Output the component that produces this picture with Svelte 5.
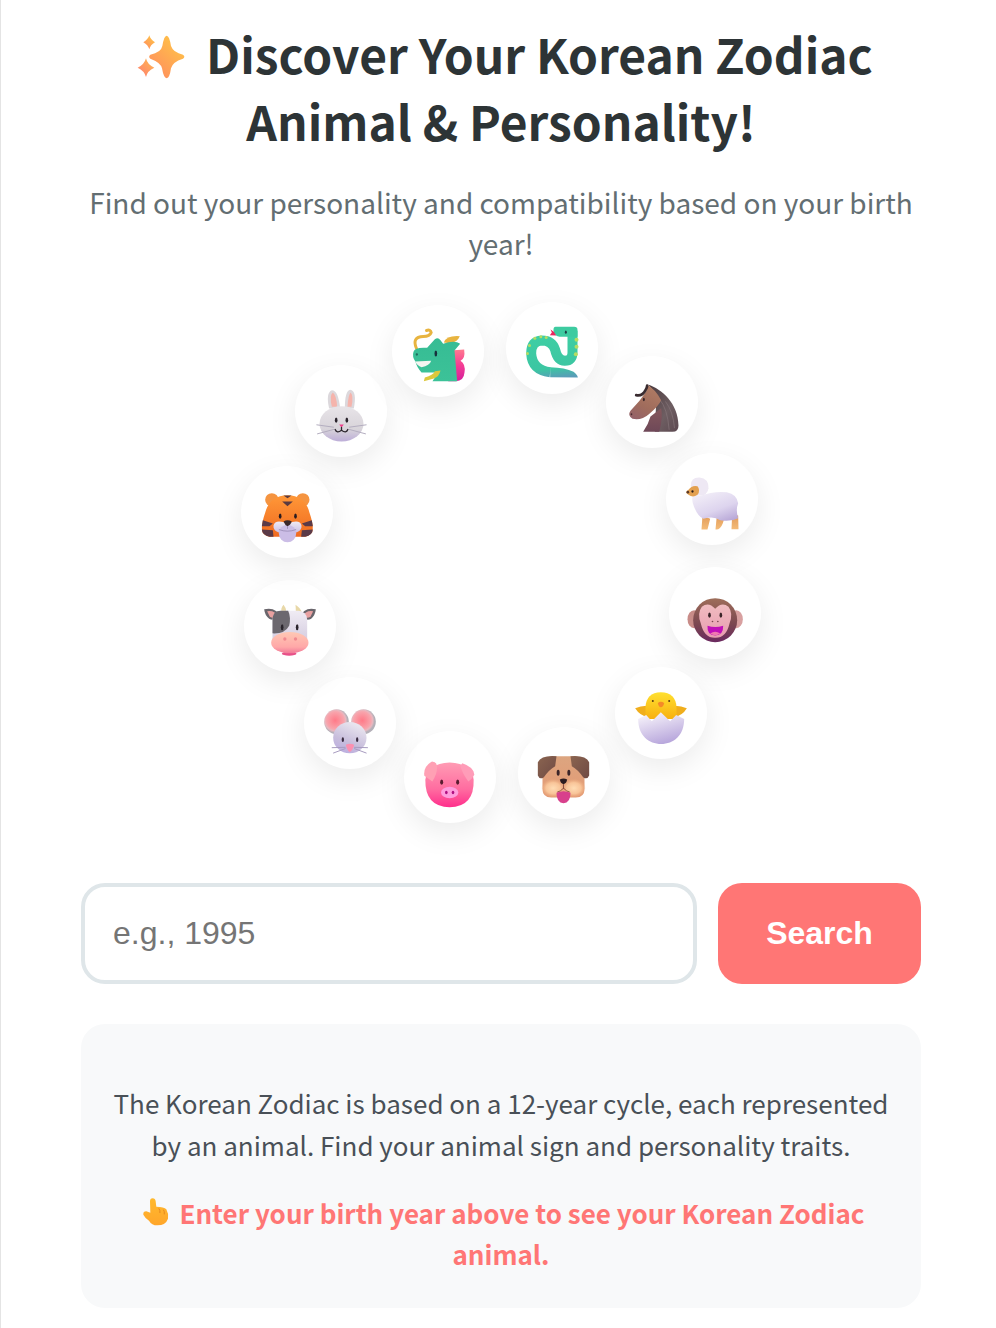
<script>
  const R = 220.2;
  const animals = [
    { name: 'snake', icon: snake },
    { name: 'horse', icon: horse },
    { name: 'sheep', icon: sheep },
    { name: 'monkey', icon: monkey },
    { name: 'rooster', icon: chick },
    { name: 'dog', icon: dog },
    { name: 'pig', icon: pig },
    { name: 'rat', icon: rat },
    { name: 'ox', icon: cow },
    { name: 'tiger', icon: tiger },
    { name: 'rabbit', icon: rabbit },
    { name: 'dragon', icon: dragon }
  ].map((a, i) => {
    const t = ((13.3 + i * 30) * Math.PI) / 180;
    return { ...a, x: 420 + R * Math.sin(t) - 46, y: 260.5 - R * Math.cos(t) - 46 };
  });
</script>

{#snippet snake()}
  <svg class="art" viewBox="17.5 21.5 276 276">
    <defs><linearGradient id="sn" gradientUnits="userSpaceOnUse" x1="150" y1="100" x2="165" y2="250"><stop offset="0" stop-color="#3fd0a4"/><stop offset="0.8" stop-color="#3cc6a2"/><stop offset="1" stop-color="#5a9cb8"/></linearGradient></defs>
    <path d="M217 108V172Q217 198 194 198Q172 197 165 165Q156 137 125 137Q93 139 93 176Q96 226 150 232" fill="none" stroke="url(#sn)" stroke-width="30"/>
    <path d="M150 217Q195 218 220 231Q232 240 233 248Q195 247 150 247Z" fill="url(#sn)"/>
    <path d="M166 96H222Q232 96 232 106V126H178Q160 122 160 106Q160 96 166 96Z" fill="#3dcba0"/>
    <ellipse cx="197" cy="112" rx="3" ry="5" fill="#1d3c44"/>
    <path d="M161 111L151 104L155 113L149 121L168 122Z" fill="#e8285e"/>
    <g fill="#b6dc62"><circle cx="229" cy="135" r="6"/><circle cx="229" cy="156" r="6"/><circle cx="227" cy="178" r="6"/><circle cx="104" cy="130" r="4.5"/><circle cx="122" cy="126" r="4.5"/><circle cx="138" cy="128" r="4.5"/><circle cx="82" cy="176" r="4.5"/><circle cx="88" cy="152" r="4.5"/></g>
  </svg>
{/snippet}

{#snippet horse()}
  <svg class="art" viewBox="318.5 183.5 276 276">
    <defs>
      <linearGradient id="hm" x1="0" y1="0" x2="1" y2="1"><stop offset="0" stop-color="#4a3a3e"/><stop offset="0.6" stop-color="#6e5e62"/><stop offset="1" stop-color="#5c4850"/></linearGradient>
      <linearGradient id="hf" x1="0.7" y1="0" x2="0.2" y2="1"><stop offset="0" stop-color="#b07c64"/><stop offset="0.6" stop-color="#a06c5c"/><stop offset="1" stop-color="#946268"/></linearGradient>
      <linearGradient id="hn" x1="0.5" y1="0" x2="0.5" y2="1"><stop offset="0" stop-color="#85585c"/><stop offset="1" stop-color="#6e4858"/></linearGradient>
    </defs>
    <path d="M445 270C485 282 535 325 536 392Q536 411 518 411H465L470 300Z" fill="url(#hm)"/>
    <path d="M478 312Q503 340 508 405M497 320Q520 350 524 400" fill="none" stroke="#847478" stroke-width="3" opacity="0.7"/>
    <path d="M452 365Q445 390 430 411H478Q490 370 484 340Z" fill="url(#hn)"/>
    <path d="M442 270L439 290Q420 320 392 348Q382 362 398 372Q425 378 447 358Q476 334 484 316Q465 282 442 270Z" fill="url(#hf)"/>
    <path d="M409 301Q428 305 437 286Q442 278 442 272" fill="none" stroke="#3a2c30" stroke-width="8" stroke-linecap="round"/>
    <ellipse cx="395" cy="358" rx="2.5" ry="3" fill="#4a2c30"/>
    <ellipse cx="432" cy="314" rx="3" ry="5" fill="#3a2428"/>
  </svg>
{/snippet}

{#snippet sheep()}
  <svg class="art" viewBox="497.5 474.5 276 276">
    <defs>
      <linearGradient id="sb" x1="0.2" y1="0" x2="0.8" y2="1"><stop offset="0" stop-color="#f3eff8"/><stop offset="0.6" stop-color="#ddd4ee"/><stop offset="1" stop-color="#b9a9d8"/></linearGradient>
      <linearGradient id="sl" x1="0.5" y1="0" x2="0.5" y2="1"><stop offset="0" stop-color="#e09a58"/><stop offset="1" stop-color="#f5bc78"/></linearGradient>
    </defs>
    <path d="M607 662L604 704H622L630 672ZM650 662L646 704Q660 706 668 685L674 666ZM696 660L694 703H715L714 662Z" fill="url(#sl)"/>
    <path d="M600 603Q570 590 578 625Q590 664 610 672Q640 662 660 676Q690 682 714 670Q706 645 714 625Q710 598 680 592Q640 588 600 603Z" fill="url(#sb)"/>
    <path d="M572 572Q572 547 598 548Q626 551 625 580Q622 602 600 602Q574 600 572 572Z" fill="#eee8f4"/>
    <path d="M565 585Q575 570 592 574Q602 586 592 600Q578 610 565 600Q552 592 565 585Z" fill="#e3a050"/>
    <circle cx="563" cy="592" r="4" fill="#5b3a28"/>
    <circle cx="577" cy="590" r="3.5" fill="#2b1c18"/>
  </svg>
{/snippet}

{#snippet monkey()}
  <svg class="art" viewBox="506.5 20.5 276 276">
    <defs>
      <linearGradient id="mh" x1="0.5" y1="0" x2="0.5" y2="1"><stop offset="0" stop-color="#9e6e5a"/><stop offset="0.6" stop-color="#7a4650"/><stop offset="1" stop-color="#6b2a60"/></linearGradient>
      <linearGradient id="mf" x1="0.5" y1="0" x2="0.5" y2="1"><stop offset="0" stop-color="#f0bcc0"/><stop offset="1" stop-color="#e89cb0"/></linearGradient>
    </defs>
    <ellipse cx="582" cy="177" rx="20" ry="27" fill="#c88c88"/>
    <ellipse cx="708" cy="177" rx="20" ry="27" fill="#d8a0a0"/>
    <circle cx="645" cy="180" r="66" fill="url(#mh)"/>
    <path d="M645 146Q625 124 605 140Q590 160 602 190Q612 234 645 233Q678 234 688 190Q700 160 685 140Q665 124 645 146Z" fill="url(#mf)"/>
    <ellipse cx="628" cy="165" rx="4" ry="8" fill="#3a2428"/>
    <ellipse cx="662" cy="165" rx="4" ry="8" fill="#3a2428"/>
    <circle cx="637" cy="184" r="2.5" fill="#7a4650"/><circle cx="653" cy="184" r="2.5" fill="#7a4650"/>
    <path d="M622 197Q645 204 669 197Q670 226 645 226Q620 226 622 197Z" fill="#c010b8"/>
    <path d="M630 220Q645 210 660 220Q645 230 630 220Z" fill="#f07ab0"/>
  </svg>
{/snippet}

{#snippet chick()}
  <svg class="art" viewBox="344.5 324 276 276">
    <defs>
      <linearGradient id="cy" x1="0.5" y1="0" x2="0.5" y2="1"><stop offset="0" stop-color="#ffe030"/><stop offset="1" stop-color="#f8b010"/></linearGradient>
      <linearGradient id="ce" x1="0.3" y1="0" x2="0.7" y2="1"><stop offset="0" stop-color="#f6f2fa"/><stop offset="1" stop-color="#b4a2da"/></linearGradient>
    </defs>
    <path d="M440 440Q420 440 405 448Q420 472 445 474ZM524 440Q544 440 560 448Q546 472 520 474Z" fill="#f0ae1c"/>
    <path d="M436 480V445Q438 401 482 400Q527 401 529 445V480Z" fill="url(#cy)"/>
    <path d="M414 480L438 468L455 487L482 460L510 487L528 468L552 480C552 530 520 555 483 555C446 555 414 530 414 480Z" fill="url(#ce)"/>
    <path d="M473 432Q482 425 492 432Q490 444 482 445Q475 444 473 432Z" fill="#f58a28"/>
    <circle cx="458" cy="426" r="3" fill="#5a3a10"/><circle cx="507" cy="426" r="3" fill="#5a3a10"/>
  </svg>
{/snippet}

{#snippet dog()}
  <svg class="art" viewBox="54.5 504.5 276 276">
    <defs>
      <linearGradient id="dh" x1="0.5" y1="0" x2="0.5" y2="1"><stop offset="0" stop-color="#dca580"/><stop offset="1" stop-color="#e49a74"/></linearGradient>
      <linearGradient id="de" x1="0" y1="0" x2="1" y2="1"><stop offset="0" stop-color="#8a6450"/><stop offset="1" stop-color="#6f4a44"/></linearGradient>
      <radialGradient id="dc"><stop offset="0" stop-color="#ffdcb4"/><stop offset="0.6" stop-color="#f8c498"/><stop offset="1" stop-color="#f0b080" stop-opacity="0"/></radialGradient>
    </defs>
    <path d="M128 625Q128 592 160 592H222Q254 592 254 625V690Q254 716 228 716H154Q128 716 128 690Z" fill="url(#dh)"/>
    <path d="M170 592Q125 588 114 610V650Q120 664 132 655Q148 632 166 622Z" fill="url(#de)"/>
    <path d="M212 592Q258 588 268 610V650Q262 664 250 655Q234 632 216 622Z" fill="url(#de)"/>
    <ellipse cx="160" cy="688" rx="36" ry="28" fill="url(#dc)"/>
    <ellipse cx="222" cy="688" rx="36" ry="28" fill="url(#dc)"/>
    <ellipse cx="175" cy="642" rx="4.5" ry="9" fill="#3a2428"/><ellipse cx="207" cy="642" rx="4.5" ry="9" fill="#3a2428"/>
    <path d="M180 662Q191 656 202 662Q200 674 191 676Q182 674 180 662Z" fill="#2b1c20"/>
    <path d="M191 676V690M172 700Q182 698 191 688Q200 698 210 700" fill="none" stroke="#7a4034" stroke-width="2.5"/>
    <path d="M170 702Q191 692 212 702Q212 733 191 733Q170 733 170 702Z" fill="#d8408c"/>
  </svg>
{/snippet}

{#snippet pig()}
  <svg class="art" viewBox="521 513.5 276 276">
    <defs>
      <linearGradient id="ph" x1="0.5" y1="0" x2="0.5" y2="1"><stop offset="0" stop-color="#ff9cb4"/><stop offset="0.6" stop-color="#ff6ca0"/><stop offset="1" stop-color="#ff2e8c"/></linearGradient>
    </defs>
    <path d="M585 660Q590 612 658 608Q726 612 730 660Q732 742 658 742Q584 742 585 660Z" fill="url(#ph)"/>
    <path d="M605 605Q578 620 582 648L606 665Q622 640 620 618Q618 605 605 605Z" fill="#ffa0b4"/>
    <path d="M696 610Q732 622 732 645Q724 660 714 665Q695 640 690 618Z" fill="#ff9cb8"/>
    <ellipse cx="634" cy="667" rx="4.5" ry="8" fill="#5a1c30"/><ellipse cx="682" cy="667" rx="4.5" ry="8" fill="#5a1c30"/>
    <ellipse cx="658" cy="698" rx="26" ry="17" fill="#ff9cdc"/>
    <ellipse cx="648" cy="698" rx="4" ry="5" fill="#b01080"/><ellipse cx="668" cy="698" rx="4" ry="5" fill="#b01080"/>
  </svg>
{/snippet}

{#snippet rat()}
  <svg class="art" viewBox="221.5 350 276 276">
    <defs>
      <linearGradient id="rh" x1="0.7" y1="0.1" x2="0.3" y2="1"><stop offset="0" stop-color="#e8e4ee"/><stop offset="0.6" stop-color="#c8bedc"/><stop offset="1" stop-color="#bcaee0"/></linearGradient>
      <radialGradient id="re" cx="0.45" cy="0.45"><stop offset="0" stop-color="#ff7a88"/><stop offset="0.7" stop-color="#f8a4ac"/><stop offset="0.85" stop-color="#e8b8c0"/><stop offset="1" stop-color="#b4b0b8"/></radialGradient>
    </defs>
    <circle cx="319" cy="484" r="37" fill="url(#re)"/>
    <circle cx="400" cy="484" r="37" fill="url(#re)"/>
    <ellipse cx="359" cy="532" rx="50" ry="47" fill="url(#rh)"/>
    <ellipse cx="338" cy="538" rx="3.5" ry="7" fill="#3a2c40"/><ellipse cx="381" cy="538" rx="3.5" ry="7" fill="#3a2c40"/>
    <path d="M347 553Q359 548 372 553Q368 570 359 575Q350 570 347 553Z" fill="#fb90b0"/>
    <path d="M345 561L306 562M345 565L310 578M373 561L412 562M373 565L408 578" stroke="#a89cc0" stroke-width="3" fill="none" stroke-linecap="round"/>
  </svg>
{/snippet}

{#snippet cow()}
  <svg class="art" viewBox="42.5 58 276 276">
    <defs>
      <linearGradient id="ow" x1="0.5" y1="0" x2="0.5" y2="1"><stop offset="0" stop-color="#f0ecf4"/><stop offset="1" stop-color="#cfc6dc"/></linearGradient>
      <linearGradient id="om" x1="0.5" y1="0" x2="0.5" y2="1"><stop offset="0" stop-color="#ffc8b4"/><stop offset="0.7" stop-color="#ffa8a8"/><stop offset="1" stop-color="#f07898"/></linearGradient>
    </defs>
    <path d="M155 155Q152 142 161 132Q170 142 170 155ZM198 155Q198 142 197 132Q212 142 216 155Z" fill="#e8d8a8"/>
    <path d="M103 146Q140 138 152 170Q130 182 118 174Q105 165 103 146ZM258 146Q222 138 210 170Q232 182 244 174Q256 165 258 146Z" fill="#6a666c"/>
    <path d="M112 152Q135 148 144 168Q128 174 120 168ZM250 152Q228 148 218 168Q234 174 242 168Z" fill="#e8a0a0"/>
    <rect x="128" y="150" width="104" height="110" rx="26" fill="url(#ow)"/>
    <path d="M128 178Q128 150 152 150H175Q184 170 178 195Q165 220 128 218Z" fill="#6c686f"/>
    <ellipse cx="157" cy="200" rx="4" ry="9" fill="#2a242c"/><ellipse cx="202" cy="200" rx="4" ry="9" fill="#2a242c"/>
    <ellipse cx="178" cy="279" rx="22" ry="6" fill="#e85088"/>
    <ellipse cx="180" cy="246" rx="56" ry="32" fill="url(#om)"/>
    <circle cx="165" cy="235" r="5" fill="#f08a90"/><circle cx="197" cy="235" r="5" fill="#f08a90"/>
  </svg>
{/snippet}

{#snippet tiger()}
  <svg class="art" viewBox="32.5 509.5 276 276">
    <defs>
      <linearGradient id="th" x1="0.5" y1="0" x2="0.5" y2="1"><stop offset="0" stop-color="#ff9838"/><stop offset="1" stop-color="#f06a20"/></linearGradient>
      <linearGradient id="tm" x1="0.5" y1="0" x2="0.5" y2="1"><stop offset="0" stop-color="#efeaf4"/><stop offset="1" stop-color="#c8bce4"/></linearGradient>
    </defs>
    <circle cx="125" cy="611" r="20" fill="#f59440"/><circle cx="218" cy="611" r="20" fill="#f59440"/>
    <path d="M105 650Q118 598 172 597Q226 598 238 650Q252 690 246 708Q238 722 215 722H128Q104 722 97 708Q91 690 105 650Z" fill="url(#th)"/>
    <path d="M156 616H188L172 630ZM160 598H184L172 606Z" fill="#5a3a40"/>
    <path d="M98 672L128 682L118 690L95 690ZM95 700L128 702L130 722Q104 722 97 708ZM245 672L215 682L225 690L248 690ZM248 700L215 702L213 722Q240 722 246 708Z" fill="#5a3a48"/>
    <ellipse cx="150" cy="660" rx="4" ry="8" fill="#2a1c20"/><ellipse cx="196" cy="660" rx="4" ry="8" fill="#2a1c20"/>
    <path d="M172 682Q135 668 130 688Q128 712 172 712Q216 712 214 688Q210 668 172 682Z" fill="url(#tm)"/>
    <circle cx="172" cy="712" r="26" fill="#cbbde6"/>
    <path d="M160 676Q172 668 185 676Q180 688 172 690Q165 688 160 676Z" fill="#3a282c"/>
    <path d="M172 690V698M146 700Q172 710 198 700" fill="none" stroke="#8d7ea8" stroke-width="2"/>
  </svg>
{/snippet}

{#snippet rabbit()}
  <svg class="art" viewBox="194.5 209.5 276 276">
    <defs>
      <linearGradient id="ba" x1="0.5" y1="0" x2="0.5" y2="1"><stop offset="0" stop-color="#e8e4e8"/><stop offset="0.65" stop-color="#d8d4da"/><stop offset="1" stop-color="#bdaed8"/></linearGradient>
    </defs>
    <path d="M297 340Q286 293 305 285Q324 284 330 340Z" fill="#dcd8dc"/>
    <path d="M344 340Q344 287 360 284Q381 287 371 340Z" fill="#dcd8dc"/>
    <path d="M305 335Q297 300 308 292Q319 300 321 335Z" fill="#f5b4ac"/>
    <path d="M352 335Q354 300 361 292Q371 300 364 335Z" fill="#f5b4ac"/>
    <ellipse cx="334" cy="386" rx="66" ry="53" fill="url(#ba)"/>
    <ellipse cx="318" cy="375" rx="4" ry="8" fill="#2a242c"/><ellipse cx="350" cy="375" rx="4" ry="8" fill="#2a242c"/>
    <path d="M327 388H341L334 397Z" fill="#f0408c"/>
    <path d="M315 403Q320 416 334 405Q348 416 353 403M334 397V405" fill="none" stroke="#2a242c" stroke-width="4" stroke-linecap="round"/>
    <path d="M310 396L260 389M310 403L262 416M358 396L408 389M358 403L406 416" stroke="#b4aec0" stroke-width="3" fill="none" stroke-linecap="round"/>
  </svg>
{/snippet}

{#snippet dragon()}
  <svg class="art" viewBox="486.5 29.5 276 276">
    <defs>
      <linearGradient id="dg" x1="0.5" y1="0" x2="0.5" y2="1"><stop offset="0" stop-color="#36bc94"/><stop offset="1" stop-color="#3cc298"/></linearGradient>
      <linearGradient id="df" x1="0.5" y1="0" x2="0.5" y2="1"><stop offset="0" stop-color="#ff7a90"/><stop offset="0.5" stop-color="#f43c94"/><stop offset="1" stop-color="#d4209c"/></linearGradient>
    </defs>
    <path d="M560 160Q545 125 580 124Q600 124 604 112Q602 102 590 106" fill="none" stroke="#e8b440" stroke-width="9" stroke-linecap="round"/>
    <path d="M642 142Q650 120 690 123Q682 142 660 144Z" fill="#e8b440"/>
    <path d="M672 165L703 163Q707 190 692 197Q708 207 704 232Q702 258 678 258H655Z" fill="url(#df)"/>
    <path d="M551 170Q555 155 592 158L615 132Q625 125 632 135L640 146Q675 134 691 146L674 166L682 258H608L625 232H575Q560 215 557 200Q546 185 551 170Z" fill="url(#dg)"/>
    <path d="M556 199L604 197Q600 212 575 216Q562 212 556 199Z" fill="#f4f4f0"/>
    <path d="M632 226Q628 245 612 250Q595 255 582 258L585 247Q610 240 615 228Z" fill="#dcc83c"/>
    <ellipse cx="618" cy="175" rx="4" ry="9" fill="#17313c"/>
    <circle cx="561" cy="178" r="3.5" fill="#1f6a5c"/>
  </svg>
{/snippet}

<div class="page">
  <h1><svg class="sparkle" viewBox="390 72 198 198" aria-hidden="true">
      <defs>
        <linearGradient id="sp" x1="0.9" y1="0" x2="0.1" y2="1"><stop offset="0" stop-color="#ffc845"/><stop offset="1" stop-color="#ff8a60"/></linearGradient>
        <linearGradient id="sp2" x1="0.9" y1="0" x2="0.1" y2="1"><stop offset="0" stop-color="#ffb850"/><stop offset="1" stop-color="#ff7f70"/></linearGradient>
      </defs>
      <path d="M503 107Q511 107 516 138Q523 158 552 164Q560 170 552 176Q520 186 516 205Q512 234 503 235Q494 234 489 205Q486 188 454 176Q447 170 454 164Q486 158 490 138Q495 107 503 107Z" fill="url(#sp)"/>
      <path d="M451 106Q454 118 468 127Q454 135 451 148Q447 135 433 127Q447 118 451 106Z" fill="url(#sp)"/>
      <path d="M441 175Q445 194 466 203Q445 212 441 231Q436 212 416 203Q436 194 441 175Z" fill="url(#sp2)"/>
    </svg> Discover Your Korean Zodiac Animal &amp; Personality!</h1>
  <p class="sub">Find out your personality and compatibility based on your birth year!</p>

  <div class="ring">
    {#each animals as a (a.name)}
      <div class="token" style="left:{a.x}px;top:{a.y}px">{@render a.icon()}</div>
    {/each}
  </div>

  <div class="search">
    <input type="text" placeholder="e.g., 1995" />
    <button type="button">Search</button>
  </div>

  <div class="card">
    <p class="info">The Korean Zodiac is based on a 12-year cycle, each represented by an animal. Find your animal sign and personality traits.</p>
    <p class="hint"><svg class="hand" viewBox="207 20 108 108" aria-hidden="true">
        <defs><linearGradient id="hd" x1="0.5" y1="0" x2="0.5" y2="1"><stop offset="0" stop-color="#ffb92e"/><stop offset="1" stop-color="#ffa62a"/></linearGradient></defs>
        <path d="M243 42Q243 33 251 33Q259 33 260 42L262 58Q285 58 292 66Q299 78 297 94Q290 114 265 114Q248 114 240 100Q228 92 223 82Q222 72 232 72L244 76Z" fill="url(#hd)"/>
        <path d="M270 64Q274 68 273 76M284 68Q287 72 286 80" fill="none" stroke="#e0811c" stroke-width="2.5" stroke-linecap="round"/>
      </svg> Enter your birth year above to see your Korean Zodiac animal.</p>
  </div>
</div>

<style>
  :global(body) {
    background: #fff;
    overflow: hidden;
  }
  .page {
    box-sizing: border-box;
    min-height: 1328px;
    border-left: 1px solid #e4e4e4;
    padding: 20px 75px 0 80px;
    font-family: "Noto Sans CJK KR", "Noto Sans", sans-serif;
    text-align: center;
  }
  h1 {
    margin: 0;
    font-size: 47.9px;
    line-height: 67.2px;
    font-weight: 700;
    color: #2d3436;
  }
  .sparkle {
    width: 66px;
    height: 66px;
    margin: -20px 0;
    vertical-align: 4px;
  }
  .sub {
    margin: 27.5px 0 0;
    font-size: 28px;
    line-height: 41px;
    color: #636e72;
  }
  .ring {
    position: relative;
    height: 521px;
    margin-top: 38px;
  }
  .token {
    position: absolute;
    width: 92px;
    height: 92px;
    border-radius: 50%;
    background: #fff;
    box-shadow: 0 10px 30px rgba(0, 0, 0, 0.08);
  }
  .art {
    display: block;
    width: 92px;
    height: 92px;
  }
  .search {
    display: flex;
    gap: 21px;
    margin-top: 60px;
  }
  input {
    box-sizing: border-box;
    flex: 1;
    min-width: 0;
    height: 101px;
    padding: 0 28px;
    border: 4px solid #dfe6e9;
    border-radius: 24px;
    background: #fff;
    font-family: "Liberation Sans", Arial, sans-serif;
    font-size: 32px;
    outline: none;
  }
  button {
    width: 203px;
    height: 101px;
    border: 0;
    border-radius: 24px;
    background: #ff7675;
    color: #fff;
    font-family: "Liberation Sans", Arial, sans-serif;
    font-size: 32px;
    font-weight: 700;
  }
  .card {
    margin-top: 40px;
    padding: 58px 30px 33px;
    border-radius: 24px;
    background: #f8f9fa;
  }
  .card p {
    margin: 0;
    font-size: 26px;
    line-height: 41.8px;
  }
  .info {
    color: #495057;
  }
  .card .hint {
    margin-top: 26px;
    font-weight: 700;
    color: #ff7675;
  }
  .hand {
    width: 36px;
    height: 36px;
    margin: -8px 0;
    vertical-align: 1.7px;
  }
</style>
